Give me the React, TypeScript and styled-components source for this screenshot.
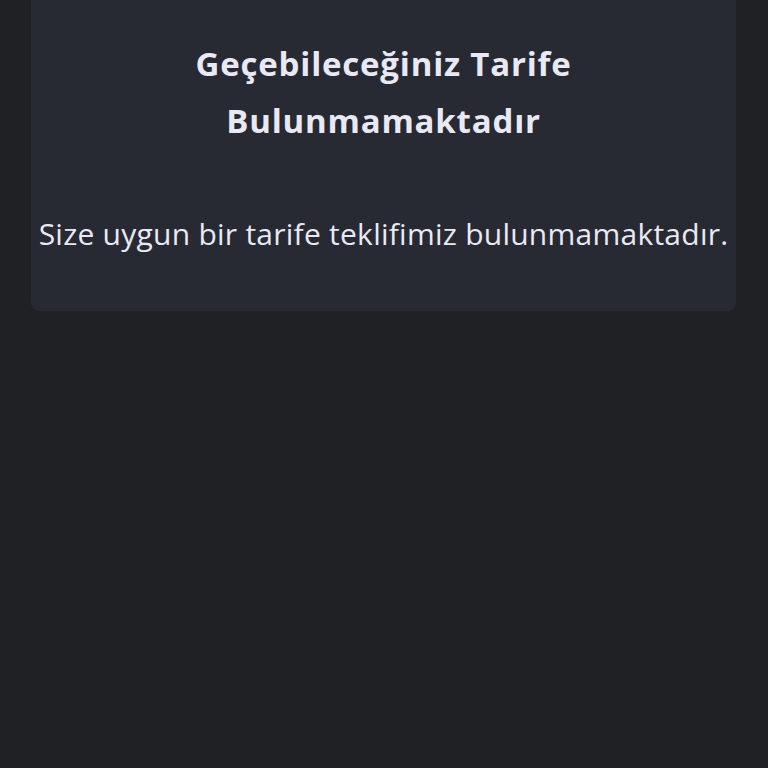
import React from "react";
import styled, { createGlobalStyle } from "styled-components";

const Global = createGlobalStyle`
  html, body { margin: 0; padding: 0; background: #202124; }
  body { font-family: "Open Sans", "Noto Sans", sans-serif; }
`;

const Page = styled.div`
  width: 768px;
  height: 768px;
  background: #202124;
  padding: 0 32px 0 31px;
  box-sizing: border-box;
`;

const Card = styled.div`
  background: #282a33;
  border-radius: 0 0 8px 8px;
  height: 311px;
  box-sizing: border-box;
  display: flex;
  flex-direction: column;
  align-items: center;
  padding-top: 35px;
`;

const Title = styled.h1`
  margin: 0;
  width: 440px;
  text-align: center;
  font-size: 33px;
  line-height: 57px;
  letter-spacing: 0.8px;
  font-weight: 700;
  color: #e8e9f4;
`;

const Message = styled.p`
  margin: 65px 0 0;
  font-size: 30px;
  line-height: 40px;
  letter-spacing: 0.25px;
  font-weight: 400;
  color: #e8e9f4;
  text-align: center;
  white-space: nowrap;
`;

export default function App() {
  return (
    <>
      <Global />
      <Page>
        <Card>
          <Title>Geçebileceğiniz Tarife Bulunmamaktadır</Title>
          <Message>Size uygun bir tarife teklifimiz bulunmamaktadır.</Message>
        </Card>
      </Page>
    </>
  );
}
